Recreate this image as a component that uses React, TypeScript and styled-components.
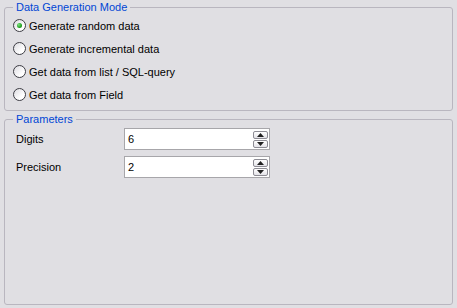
import React, { useState } from 'react'
import styled, { createGlobalStyle } from 'styled-components'

const GlobalStyle = createGlobalStyle`
	html, body {
		margin: 0;
		padding: 0;
		background: #e0dfe3;
	}
	body {
		font-family: 'Liberation Sans', Arial, sans-serif;
		font-size: 11px;
		color: #000;
	}
`

const Page = styled.div`
	box-sizing: border-box;
	width: 457px;
	height: 308px;
	padding: 1px 4px 3px 4px;
	display: flex;
	flex-direction: column;
	gap: 2px;
	background: #e0dfe3;
`

const Group = styled.fieldset<{ $grow?: boolean }>`
	margin: 0;
	min-width: 0;
	padding: 0 8px 4px 8px;
	border: 1px solid #b9b6bf;
	border-radius: 3px;
	flex: ${(p) => (p.$grow ? '1' : 'none')};
`

const Legend = styled.legend`
	padding: 0 3px;
	color: #0046d5;
	font-size: 11px;
	line-height: 13px;
`

const RadioList = styled.div`
	display: flex;
	flex-direction: column;
`

const RadioRow = styled.label`
	height: 23px;
	display: flex;
	align-items: center;
	gap: 3px;
	cursor: default;
`

const RadioCircle = styled.span<{ $checked: boolean }>`
	box-sizing: border-box;
	width: 13px;
	height: 13px;
	border-radius: 50%;
	border: 1px solid #3d3d44;
	background: linear-gradient(135deg, #dcdbe0 0%, #ffffff 70%);
	display: flex;
	align-items: center;
	justify-content: center;

	&::after {
		content: '';
		display: ${(p) => (p.$checked ? 'block' : 'none')};
		width: 5px;
		height: 5px;
		border-radius: 50%;
		background: radial-gradient(circle at 35% 35%, #7fe37f 0%, #21a121 60%, #177a17 100%);
	}
`

const Params = styled.div`
	padding-top: 2px;
	display: flex;
	flex-direction: column;
	gap: 6px;
`

const ParamRow = styled.div`
	display: flex;
	align-items: center;
`

const ParamLabel = styled.span`
	width: 108px;
	padding-left: 3px;
`

const SpinBox = styled.div`
	box-sizing: border-box;
	width: 146px;
	height: 22px;
	background: #fff;
	border: 1px solid #a7a6aa;
	display: flex;
	align-items: center;
	padding: 0 1px 0 3px;
`

const SpinValue = styled.span`
	flex: 1;
`

const SpinButtons = styled.div`
	display: flex;
	flex-direction: column;
	gap: 1px;
`

const SpinButton = styled.span`
	box-sizing: border-box;
	width: 15px;
	height: 8px;
	border: 1px solid #8d8c94;
	border-radius: 2px;
	background: linear-gradient(180deg, #ffffff 0%, #e4e3e8 100%);
	display: flex;
	align-items: center;
	justify-content: center;
`

const Arrow = ({ down }: { down?: boolean }) => (
	<svg width="7" height="4" viewBox="0 0 7 4">
		<path d={down ? 'M0 0H7L3.5 4Z' : 'M0 4H7L3.5 0Z'} fill="#202020" />
	</svg>
)

const modes = [
	'Generate random data',
	'Generate incremental data',
	'Get data from list / SQL-query',
	'Get data from Field',
]

const params = [
	{ label: 'Digits', value: '6' },
	{ label: 'Precision', value: '2' },
]

export default function App() {
	const [mode, setMode] = useState(0)

	return (
		<>
			<GlobalStyle />
			<Page>
				<Group>
					<Legend>Data Generation Mode</Legend>
					<RadioList>
						{modes.map((m, i) => (
							<RadioRow key={m} onClick={() => setMode(i)}>
								<RadioCircle $checked={mode === i} />
								{m}
							</RadioRow>
						))}
					</RadioList>
				</Group>
				<Group $grow>
					<Legend>Parameters</Legend>
					<Params>
						{params.map((p) => (
							<ParamRow key={p.label}>
								<ParamLabel>{p.label}</ParamLabel>
								<SpinBox>
									<SpinValue>{p.value}</SpinValue>
									<SpinButtons>
										<SpinButton>
											<Arrow />
										</SpinButton>
										<SpinButton>
											<Arrow down />
										</SpinButton>
									</SpinButtons>
								</SpinBox>
							</ParamRow>
						))}
					</Params>
				</Group>
			</Page>
		</>
	)
}
